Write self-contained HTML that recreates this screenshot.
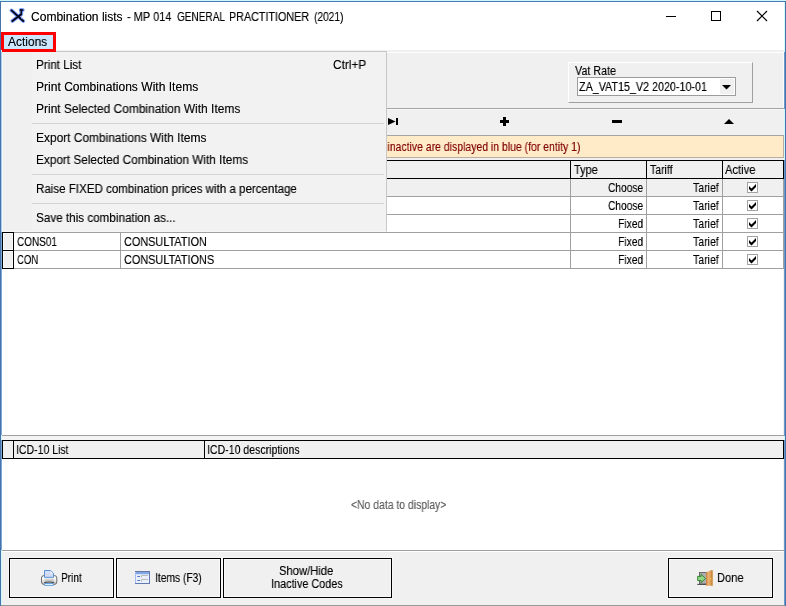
<!DOCTYPE html>
<html lang="en">
<head>
<meta charset="utf-8">
<title>Combination lists - MP 014 GENERAL PRACTITIONER (2021)</title>
<style>
*{box-sizing:border-box;margin:0;padding:0}
html,body{width:786px;height:606px;overflow:hidden;background:#fff}
body{position:relative;font-family:"Liberation Sans",Arial,sans-serif;font-size:12px;color:#000}
.a{position:absolute}
.tx{position:absolute;white-space:nowrap;line-height:16px;height:16px;transform-origin:0 0;will-change:transform;text-shadow:0 0 .3px rgba(0,0,0,.45)}
.k{background:#000}
.g{background:#a0a0a0}
.w{background:#fff}
.cb{position:absolute;width:11px;height:11px;background:#fff;border:1px solid #a2a2a2}
.btn{position:absolute;width:105px;height:40px;top:558px;border:1px solid #000;background:#f0f0f0;box-shadow:inset 0 0 0 1px #f9f9f9,0 0 0 1px #f7f7f7}
.ind{position:absolute;left:2px;width:12px;height:19px;background:#f0f0f0;border:1px solid #000;box-shadow:inset 0 0 0 1px #fbfbfb}
.sep{position:absolute;left:32px;width:352px;height:1px;background:#d4d4d4;z-index:30}
</style>
</head>
<body>
<!-- client area -->
<div class="a" style="left:2px;top:50px;width:782px;height:555px;background:#f0f0f0"></div>

<!-- title bar icon -->
<svg class="a" style="left:8px;top:7px" width="18" height="18" viewBox="0 0 18 18">
  <g fill="none" stroke="#4a78f4" stroke-width="3.7" stroke-linecap="round" stroke-linejoin="round" opacity="0.78">
    <path d="M3.5 3.4 L15.2 14"/><path d="M4.4 14 L13.3 7.3 V3.2"/><path d="M12.6 3 H14.8"/>
  </g>
  <g fill="none" stroke="#04041e" stroke-width="1.9" stroke-linecap="round" stroke-linejoin="round">
    <path d="M3.5 3.4 L15.2 14"/><path d="M4.4 14 L12.9 7.6"/>
    <path d="M13.3 7.6 V3.2" stroke-width="1.5" stroke="#0b0b10"/><path d="M12.5 3 H14.8" stroke-width="1.6"/>
  </g>
  <path d="M13.2 11 L14.2 11.9" stroke="#cfe0ff" stroke-width="0.8" fill="none"/>
</svg>
<!-- window controls -->
<div class="a k" style="left:666px;top:16px;width:10px;height:1px"></div>
<div class="a" style="left:711px;top:11px;width:10px;height:10px;border:1px solid #000"></div>
<svg class="a" style="left:756px;top:10px" width="12" height="12" viewBox="0 0 12 12"><path d="M1 1 L11 11 M11 1 L1 11" stroke="#000" stroke-width="1.15" fill="none"/></svg>

<!-- top panel bevel -->
<div class="a w" style="left:2px;top:52px;width:782px;height:1px"></div>
<div class="a w" style="left:783px;top:52px;width:1px;height:56px;opacity:.7"></div>
<!-- Vat Rate group -->
<div class="a" style="left:568px;top:62px;width:185px;height:41px;border:1px solid #a0a0a0;border-top-color:#fff;border-left-color:#fff"></div>
<div class="a" style="left:577px;top:77px;width:159px;height:19px;background:#fff;border:1px solid #9c9c9c"></div>
<div class="a" style="left:720px;top:79px;width:14px;height:15px;background:#f0f0f0"></div>
<svg class="a" style="left:722px;top:85px" width="9" height="5" viewBox="0 0 9 5"><path d="M0 0 H9 L4.5 4.6 Z" fill="#000"/></svg>

<!-- navigator -->
<div class="a" style="left:2px;top:108px;width:782px;height:1px;background:#a6a6a6"></div>
<div class="a" style="left:2px;top:109px;width:782px;height:1px;background:#f7f7f7"></div>
<svg class="a" style="left:388px;top:118px" width="10" height="7" viewBox="0 0 10 7"><path d="M0 0 L7.6 3.5 L0 7 Z" fill="#000"/><rect x="8" y="0" width="2" height="7" fill="#000"/></svg>
<svg class="a" style="left:500px;top:117px" width="9" height="9" viewBox="0 0 9 9"><path d="M3 0 H6 V3 H9 V6 H6 V9 H3 V6 H0 V3 H3 Z" fill="#000"/></svg>
<div class="a k" style="left:612px;top:120px;width:10px;height:3px"></div>
<svg class="a" style="left:724px;top:119px" width="10" height="5" viewBox="0 0 10 5"><path d="M5 0 L10 5 H0 Z" fill="#000"/></svg>

<!-- notice bar -->
<div class="a" style="left:2px;top:135px;width:782px;height:23px;background:#ffebc8;border:1px solid #bcae9f;border-top-color:#a4a4a4"></div>

<!-- main grid -->
<div class="a w" style="left:2px;top:160px;width:781px;height:275px"></div>
<div class="a" style="left:2px;top:179px;width:781px;height:17px;background:#f0f0f0"></div>
<div class="a" style="left:2px;top:160px;width:782px;height:19px;background:#f0f0f0;border:1px solid #000"></div>
<div class="a k" style="left:13px;top:160px;width:1px;height:19px"></div>
<div class="a k" style="left:120px;top:160px;width:1px;height:19px"></div>
<div class="a k" style="left:570px;top:160px;width:1px;height:19px"></div>
<div class="a k" style="left:646px;top:160px;width:1px;height:19px"></div>
<div class="a k" style="left:722px;top:160px;width:1px;height:19px"></div>
<div class="a g" style="left:14px;top:196px;width:770px;height:1px"></div>
<div class="a g" style="left:14px;top:214px;width:770px;height:1px"></div>
<div class="a g" style="left:14px;top:232px;width:770px;height:1px"></div>
<div class="a g" style="left:14px;top:250px;width:770px;height:1px"></div>
<div class="a g" style="left:14px;top:268px;width:770px;height:1px"></div>
<div class="a g" style="left:120px;top:179px;width:1px;height:90px"></div>
<div class="a g" style="left:570px;top:179px;width:1px;height:90px"></div>
<div class="a g" style="left:646px;top:179px;width:1px;height:90px"></div>
<div class="a g" style="left:722px;top:179px;width:1px;height:90px"></div>
<div class="a g" style="left:783px;top:179px;width:1px;height:90px"></div>
<div class="ind" style="top:178px"></div>
<div class="ind" style="top:196px"></div>
<div class="ind" style="top:214px"></div>
<div class="ind" style="top:232px"></div>
<div class="ind" style="top:250px"></div>
<!-- checkboxes -->
<div class="cb" style="left:747px;top:182px"></div>
<div class="cb" style="left:747px;top:200px"></div>
<div class="cb" style="left:747px;top:218px"></div>
<div class="cb" style="left:747px;top:236px"></div>
<div class="cb" style="left:747px;top:254px"></div>
<svg class="a" style="left:749px;top:184px" width="7" height="80" viewBox="0 0 7 80" fill="#000">
  <path d="M0 2 V5 L2.5 7.5 L7 3 V0 L2.5 4.5 Z"/>
  <path d="M0 20 V23 L2.5 25.5 L7 21 V18 L2.5 22.5 Z"/>
  <path d="M0 38 V41 L2.5 43.5 L7 39 V36 L2.5 40.5 Z"/>
  <path d="M0 56 V59 L2.5 61.5 L7 57 V54 L2.5 58.5 Z"/>
  <path d="M0 74 V77 L2.5 79.5 L7 75 V72 L2.5 76.5 Z"/>
</svg>

<!-- splitter -->
<div class="a g" style="left:2px;top:435px;width:782px;height:1px"></div>
<div class="a" style="left:2px;top:436px;width:782px;height:4px;background:#f4f4f4"></div>

<!-- ICD-10 grid -->
<div class="a w" style="left:2px;top:440px;width:781px;height:110px"></div>
<div class="a" style="left:2px;top:440px;width:782px;height:19px;background:#f0f0f0;border:1px solid #000"></div>
<div class="a k" style="left:13px;top:440px;width:1px;height:19px"></div>
<div class="a k" style="left:204px;top:440px;width:1px;height:19px"></div>
<div class="a g" style="left:2px;top:550px;width:782px;height:1px"></div>
<div class="a w" style="left:2px;top:551px;width:782px;height:1px"></div>

<!-- bottom buttons -->
<div class="btn" style="left:9px"></div>
<div class="btn" style="left:116px"></div>
<div class="btn" style="left:223px;width:169px"></div>
<div class="btn" style="left:668px"></div>
<!-- printer icon -->
<svg class="a" style="left:41px;top:570px" width="17" height="16" viewBox="0 0 17 16">
  <defs>
    <linearGradient id="pg" x1="0" y1="0" x2="0" y2="1"><stop offset="0" stop-color="#ffffff"/><stop offset="0.5" stop-color="#efefef"/><stop offset="1" stop-color="#bdbdbd"/></linearGradient>
    <linearGradient id="pc" x1="0" y1="0" x2="0" y2="1"><stop offset="0" stop-color="#e2e2e2"/><stop offset="1" stop-color="#b2b2b2"/></linearGradient>
    <linearGradient id="pp" x1="0" y1="0" x2="1" y2="1"><stop offset="0" stop-color="#cfe6fb"/><stop offset="0.5" stop-color="#d3d9f6"/><stop offset="1" stop-color="#cfe2f8"/></linearGradient>
  </defs>
  <rect x="0.5" y="5.6" width="15.3" height="8.8" rx="2.4" fill="url(#pg)" stroke="#5e5e5e" stroke-width="0.9"/>
  <rect x="3.6" y="8.4" width="9.2" height="3.6" fill="url(#pc)"/>
  <path d="M3 12.7 Q8.2 11.3 13.3 12.7" fill="none" stroke="#3c3c3c" stroke-width="0.9"/>
  <path d="M3.5 7.3 V0.5 H9.6 L12.5 3.4 V7.3 Z" fill="url(#pp)" stroke="#5a8ed2" stroke-width="1"/>
  <path d="M9.6 1 L12 3.4 H9.6 Z" fill="#f7fbff"/>
  <rect x="3.5" y="13.5" width="9" height="2.1" rx="0.4" fill="#d7effd" stroke="#5b9bdf" stroke-width="0.9"/>
</svg>
<!-- items icon -->
<svg class="a" style="left:135px;top:571px" width="15" height="13" viewBox="0 0 15 13">
  <rect x="0" y="0" width="15" height="13" fill="#e9f0fd"/>
  <rect x="1" y="1" width="13" height="2.2" fill="#7fa7e7"/>
  <rect x="0" y="0" width="1" height="13" fill="#a4bdf0"/>
  <rect x="0" y="0" width="15" height="1" fill="#67779f"/>
  <rect x="14" y="0" width="1" height="13" fill="#6279b4"/>
  <rect x="0" y="12" width="15" height="1" fill="#6279b4"/>
  <rect x="2.2" y="4.9" width="2.9" height="1.2" rx="0.5" fill="#5272c6"/>
  <rect x="2.2" y="8.9" width="2.9" height="1.2" rx="0.5" fill="#5272c6"/>
  <path d="M6.5 6.6 V4.5 H13" fill="#f1f1f1" stroke="#b2b2b2" stroke-width="0.9"/>
  <path d="M6.5 10.6 V8.5 H13" fill="#f1f1f1" stroke="#b2b2b2" stroke-width="0.9"/>
</svg>
<!-- done icon -->
<svg class="a" style="left:697px;top:570px" width="17" height="16" viewBox="0 0 17 16">
  <defs><linearGradient id="dw" x1="0" y1="0" x2="1" y2="0"><stop offset="0" stop-color="#d4843a"/><stop offset="0.35" stop-color="#eab274"/><stop offset="0.7" stop-color="#dc9a52"/><stop offset="1" stop-color="#a9651f"/></linearGradient></defs>
  <rect x="2.5" y="2.5" width="7" height="11.6" fill="#acacac" stroke="#5e5e5e" stroke-width="0.9"/>
  <path d="M0.2 14.4 H9.4" stroke="#3a3a3a" stroke-width="0.9" fill="none"/>
  <path d="M9.1 2.2 H10.6 V1.3 H12.8 V0.3 H15.9 V15.7 H9.1 Z" fill="url(#dw)"/>
  <path d="M15.9 0.3 V15.7" stroke="#fde3b4" stroke-width="0.7" opacity="0.9"/>
  <path d="M0.6 6.4 H4.1 V4.4 L8.5 8.5 L4.1 12.6 V10.6 H0.6 Z" fill="#93d684" stroke="#2f7f2c" stroke-width="0.9" stroke-linejoin="round"/>
  <circle cx="13.6" cy="8.7" r="0.8" fill="#ffc93e"/>
</svg>

<!-- popup menu -->
<div class="a" style="left:2px;top:51px;width:385px;height:181px;background:#f2f2f2;border:1px solid #c8c8c8;border-left-color:#f6f6f6;border-bottom-color:#f7f7f7;z-index:20"><div class="a" style="left:0;top:1px;width:29px;height:177px;background:#f0f0f0"></div></div>
<div class="sep" style="top:123px"></div>
<div class="sep" style="top:174px"></div>
<div class="sep" style="top:203px"></div>

<!-- menubar highlighted item -->
<div class="a" style="left:1px;top:32px;width:55px;height:20px;border:3px solid #f00;background:#cce8ff;z-index:25"></div>

<div class="tx" style="left:30.60px;top:9px;font-size:12px;transform:scaleX(1.0025)">Combination lists</div>
<div class="tx" style="left:126.50px;top:9px;font-size:12px;transform:scaleX(0.9181)">- MP 014</div>
<div class="tx" style="left:176.60px;top:9px;font-size:12px;transform:scaleX(0.8357)">GENERAL</div>
<div class="tx" style="left:229.30px;top:9px;font-size:12px;transform:scaleX(0.8955)">PRACTITIONER</div>
<div class="tx" style="left:314.40px;top:9px;font-size:12px;transform:scaleX(0.8475)">(2021)</div>
<div class="tx" style="left:8.10px;top:34px;font-size:12px;transform:scaleX(0.9936);z-index:30">Actions</div>
<div class="tx" style="left:575.40px;top:63px;font-size:12.5px;transform:scaleX(0.8606)">Vat Rate</div>
<div class="tx" style="left:578.70px;top:79px;font-size:12.5px;transform:scaleX(0.8591)">ZA_VAT15_V2 2020-10-01</div>
<div class="tx" style="left:573.60px;top:162px;font-size:12.5px;transform:scaleX(0.8730)">Type</div>
<div class="tx" style="left:650.00px;top:162px;font-size:12.5px;transform:scaleX(0.8361)">Tariff</div>
<div class="tx" style="left:725.00px;top:162px;font-size:12.5px;transform:scaleX(0.8977)">Active</div>
<div class="tx" style="left:17.00px;top:162px;font-size:12.5px;transform:scaleX(0.8353)">Code</div>
<div class="tx" style="left:122.77px;top:162px;font-size:12.5px;transform:scaleX(0.9306)">Description</div>
<div class="tx" style="left:16.80px;top:234px;font-size:12.5px;transform:scaleX(0.7989)">CONS01</div>
<div class="tx" style="left:123.70px;top:234px;font-size:12.5px;transform:scaleX(0.8705)">CONSULTATION</div>
<div class="tx" style="left:16.80px;top:252px;font-size:12.5px;transform:scaleX(0.7640)">CON</div>
<div class="tx" style="left:123.70px;top:252px;font-size:12.5px;transform:scaleX(0.8706)">CONSULTATIONS</div>
<div class="tx" style="left:16.80px;top:180px;font-size:12.5px;transform:scaleX(0.8497)">GP01</div>
<div class="tx" style="left:123.70px;top:180px;font-size:12.5px;transform:scaleX(0.8851)">GENERAL PRACTITIONER</div>
<div class="tx" style="left:16.80px;top:198px;font-size:12.5px;transform:scaleX(0.8497)">GP02</div>
<div class="tx" style="left:123.70px;top:198px;font-size:12.5px;transform:scaleX(0.8638)">GENERAL PRACTITIONER FOLLOW UP</div>
<div class="tx" style="left:15.95px;top:216px;font-size:12.5px;transform:scaleX(0.8500)">FLU</div>
<div class="tx" style="left:122.80px;top:216px;font-size:12.5px;transform:scaleX(0.8967)">FLU VACCINATION</div>
<div class="tx" style="left:16.26px;top:442px;font-size:12.5px;transform:scaleX(0.8397)">ICD-10 List</div>
<div class="tx" style="left:206.86px;top:442px;font-size:12.5px;transform:scaleX(0.8441)">ICD-10 descriptions</div>
<div class="tx" style="left:351.00px;top:497px;font-size:12.5px;transform:scaleX(0.8316);color:#5c5c5c;text-shadow:0 0 .3px rgba(92,92,92,.45)">&lt;No data to display&gt;</div>
<div class="tx" style="left:60.79px;top:570px;font-size:12.5px;transform:scaleX(0.8086)">Print</div>
<div class="tx" style="left:154.78px;top:570px;font-size:12.5px;transform:scaleX(0.8210)">Items (F3)</div>
<div class="tx" style="left:279.10px;top:563px;font-size:12.5px;transform:scaleX(0.8976)">Show/Hide</div>
<div class="tx" style="left:270.63px;top:576px;font-size:12.5px;transform:scaleX(0.8670)">Inactive Codes</div>
<div class="tx" style="left:716.81px;top:570px;font-size:12.5px;transform:scaleX(0.8883)">Done</div>
<div class="tx" style="left:36.00px;top:57px;font-size:12px;transform:scaleX(0.9715);z-index:30">Print List</div>
<div class="tx" style="left:332.50px;top:57px;font-size:12px;transform:scaleX(0.9831);z-index:30">Ctrl+P</div>
<div class="tx" style="left:36.00px;top:79px;font-size:12px;transform:scaleX(1.0051);z-index:30">Print Combinations With Items</div>
<div class="tx" style="left:36.00px;top:101px;font-size:12px;transform:scaleX(0.9941);z-index:30">Print Selected Combination With Items</div>
<div class="tx" style="left:36.00px;top:130px;font-size:12px;transform:scaleX(0.9936);z-index:30">Export Combinations With Items</div>
<div class="tx" style="left:36.00px;top:152px;font-size:12px;transform:scaleX(0.9841);z-index:30">Export Selected Combination With Items</div>
<div class="tx" style="left:36.00px;top:181px;font-size:12px;transform:scaleX(0.9634);z-index:30">Raise FIXED combination prices with a percentage</div>
<div class="tx" style="left:36.00px;top:210px;font-size:12px;transform:scaleX(0.9736);z-index:30">Save this combination as...</div>
<div class="tx" style="left:608.00px;top:180px;font-size:12.5px;transform:scaleX(0.8138)">Choose</div>
<div class="tx" style="left:608.00px;top:198px;font-size:12.5px;transform:scaleX(0.8138)">Choose</div>
<div class="tx" style="left:617.88px;top:216px;font-size:12.5px;transform:scaleX(0.8239)">Fixed</div>
<div class="tx" style="left:617.88px;top:234px;font-size:12.5px;transform:scaleX(0.8239)">Fixed</div>
<div class="tx" style="left:617.88px;top:252px;font-size:12.5px;transform:scaleX(0.8239)">Fixed</div>
<div class="tx" style="left:692.90px;top:180px;font-size:12.5px;transform:scaleX(0.8426)">Tarief</div>
<div class="tx" style="left:692.90px;top:198px;font-size:12.5px;transform:scaleX(0.8426)">Tarief</div>
<div class="tx" style="left:692.90px;top:216px;font-size:12.5px;transform:scaleX(0.8426)">Tarief</div>
<div class="tx" style="left:692.90px;top:234px;font-size:12.5px;transform:scaleX(0.8426)">Tarief</div>
<div class="tx" style="left:692.90px;top:252px;font-size:12.5px;transform:scaleX(0.8426)">Tarief</div>
<div class="tx" style="left:272.72px;top:139px;font-size:12.5px;transform:scaleX(0.8364);color:#800000;text-shadow:0 0 .3px rgba(128,0,0,.45)">Combinations which are inactive are displayed in blue (for entity 1)</div>

<!-- window frame -->
<div class="a" style="left:1px;top:50px;width:1px;height:555px;background:#cdf9ff;z-index:40"></div>
<div class="a" style="left:1px;top:52px;width:1px;height:180px;background:#a6cdf4;z-index:40"></div>
<div class="a" style="left:1px;top:232px;width:1px;height:203px;background:#7aa6d8;z-index:40"></div>
<div class="a" style="left:1px;top:440px;width:1px;height:110px;background:#7aa6d8;z-index:40"></div>
<div class="a" style="left:784px;top:2px;width:1px;height:603px;background:#6a99cd;z-index:40"></div>
<div class="a" style="left:784px;top:2px;width:1px;height:50px;background:#d2fbff;z-index:40"></div>
<div class="a" style="left:784px;top:109px;width:1px;height:51px;background:#cdf9ff;z-index:40"></div>
<div class="a" style="left:784px;top:436px;width:1px;height:4px;background:#cdf9ff;z-index:40"></div>
<div class="a" style="left:0;top:605px;width:786px;height:1px;background:#9a9a9a;z-index:40"></div>
<div class="a" style="left:0;top:0;width:786px;height:1px;background:#cdf6ff;z-index:40"></div>
<div class="a" style="left:0;top:1px;width:786px;height:1px;background:#4a7ab0;z-index:40"></div>
<div class="a" style="left:0;top:1px;width:1px;height:605px;background:#4674a8;z-index:40"></div>
<div class="a" style="left:785px;top:1px;width:1px;height:605px;background:#4674a8;z-index:40"></div>
</body>
</html>
